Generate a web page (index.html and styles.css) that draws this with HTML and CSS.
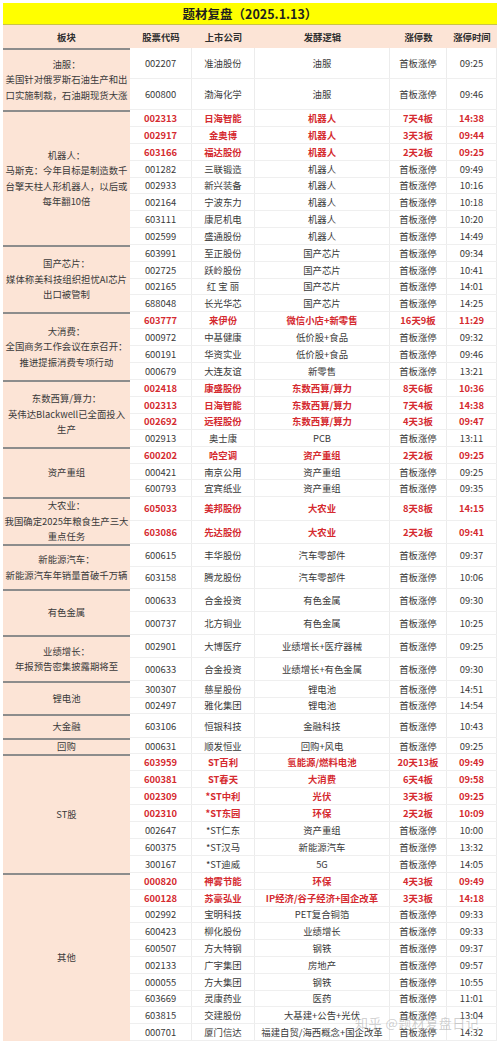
FILE: index.html
```html
<!DOCTYPE html>
<html lang="zh-CN">
<head>
<meta charset="utf-8">
<title>题材复盘（2025.1.13）</title>
<link rel="stylesheet" href="styles.css">
</head>
<body>
<div class="sheet">
  <div class="title">题材复盘（2025.1.13）</div>
  <div class="head">
    <div class="c-block">板块</div>
    <div class="c-code">股票代码</div>
    <div class="c-name">上市公司</div>
    <div class="c-logic">发酵逻辑</div>
    <div class="c-count">涨停数</div>
    <div class="c-time">涨停时间</div>
  </div>

  <div class="group h62">
    <div class="block">油服：<br>美国针对俄罗斯石油生产和出<br>口实施制裁，石油期现货大涨</div>
    <div class="rows">
      <div class="row"><div class="c-code">002207</div><div class="c-name">准油股份</div><div class="c-logic">油服</div><div class="c-count">首板涨停</div><div class="c-time">09:25</div></div>
      <div class="row"><div class="c-code">600800</div><div class="c-name">渤海化学</div><div class="c-logic">油服</div><div class="c-count">首板涨停</div><div class="c-time">09:46</div></div>
    </div>
  </div>

  <div class="group h135">
    <div class="block">机器人：<br>马斯克：今年目标是制造数千<br>台擎天柱人形机器人，以后或<br>每年翻10倍</div>
    <div class="rows">
      <div class="row hot"><div class="c-code">002313</div><div class="c-name">日海智能</div><div class="c-logic">机器人</div><div class="c-count">7天4板</div><div class="c-time">14:38</div></div>
      <div class="row hot"><div class="c-code">002917</div><div class="c-name">金奥博</div><div class="c-logic">机器人</div><div class="c-count">3天3板</div><div class="c-time">09:44</div></div>
      <div class="row hot"><div class="c-code">603166</div><div class="c-name">福达股份</div><div class="c-logic">机器人</div><div class="c-count">2天2板</div><div class="c-time">09:25</div></div>
      <div class="row"><div class="c-code">001282</div><div class="c-name">三联锻造</div><div class="c-logic">机器人</div><div class="c-count">首板涨停</div><div class="c-time">09:49</div></div>
      <div class="row"><div class="c-code">002933</div><div class="c-name">新兴装备</div><div class="c-logic">机器人</div><div class="c-count">首板涨停</div><div class="c-time">10:16</div></div>
      <div class="row"><div class="c-code">002164</div><div class="c-name">宁波东力</div><div class="c-logic">机器人</div><div class="c-count">首板涨停</div><div class="c-time">10:18</div></div>
      <div class="row"><div class="c-code">603111</div><div class="c-name">康尼机电</div><div class="c-logic">机器人</div><div class="c-count">首板涨停</div><div class="c-time">10:20</div></div>
      <div class="row"><div class="c-code">002599</div><div class="c-name">盛通股份</div><div class="c-logic">机器人</div><div class="c-count">首板涨停</div><div class="c-time">14:49</div></div>
    </div>
  </div>

  <div class="group h67">
    <div class="block">国产芯片：<br>媒体称美科技组织担忧AI芯片<br>出口被管制</div>
    <div class="rows">
      <div class="row"><div class="c-code">603991</div><div class="c-name">至正股份</div><div class="c-logic">国产芯片</div><div class="c-count">首板涨停</div><div class="c-time">09:34</div></div>
      <div class="row"><div class="c-code">002725</div><div class="c-name">跃岭股份</div><div class="c-logic">国产芯片</div><div class="c-count">首板涨停</div><div class="c-time">10:41</div></div>
      <div class="row"><div class="c-code">002165</div><div class="c-name">红 宝 丽</div><div class="c-logic">国产芯片</div><div class="c-count">首板涨停</div><div class="c-time">14:01</div></div>
      <div class="row"><div class="c-code">688048</div><div class="c-name">长光华芯</div><div class="c-logic">国产芯片</div><div class="c-count">首板涨停</div><div class="c-time">14:25</div></div>
    </div>
  </div>

  <div class="group h68">
    <div class="block">大消费：<br>全国商务工作会议在京召开：<br>推进提振消费专项行动</div>
    <div class="rows">
      <div class="row hot"><div class="c-code">603777</div><div class="c-name">来伊份</div><div class="c-logic">微信小店+新零售</div><div class="c-count">16天9板</div><div class="c-time">11:29</div></div>
      <div class="row"><div class="c-code">000972</div><div class="c-name">中基健康</div><div class="c-logic">低价股+食品</div><div class="c-count">首板涨停</div><div class="c-time">09:32</div></div>
      <div class="row"><div class="c-code">600191</div><div class="c-name">华资实业</div><div class="c-logic">低价股+食品</div><div class="c-count">首板涨停</div><div class="c-time">09:46</div></div>
      <div class="row"><div class="c-code">000679</div><div class="c-name">大连友谊</div><div class="c-logic">新零售</div><div class="c-count">首板涨停</div><div class="c-time">13:21</div></div>
    </div>
  </div>

  <div class="group h67">
    <div class="block">东数西算/算力：<br>英伟达Blackwell已全面投入<br>生产</div>
    <div class="rows">
      <div class="row hot"><div class="c-code">002418</div><div class="c-name">康盛股份</div><div class="c-logic">东数西算/算力</div><div class="c-count">8天6板</div><div class="c-time">10:36</div></div>
      <div class="row hot"><div class="c-code">002313</div><div class="c-name">日海智能</div><div class="c-logic">东数西算/算力</div><div class="c-count">7天4板</div><div class="c-time">14:38</div></div>
      <div class="row hot"><div class="c-code">002692</div><div class="c-name">远程股份</div><div class="c-logic">东数西算/算力</div><div class="c-count">4天3板</div><div class="c-time">09:47</div></div>
      <div class="row"><div class="c-code">002913</div><div class="c-name">奥士康</div><div class="c-logic">PCB</div><div class="c-count">首板涨停</div><div class="c-time">13:11</div></div>
    </div>
  </div>

  <div class="group h50">
    <div class="block">资产重组</div>
    <div class="rows">
      <div class="row hot"><div class="c-code">600202</div><div class="c-name">哈空调</div><div class="c-logic">资产重组</div><div class="c-count">2天2板</div><div class="c-time">09:25</div></div>
      <div class="row"><div class="c-code">000421</div><div class="c-name">南京公用</div><div class="c-logic">资产重组</div><div class="c-count">首板涨停</div><div class="c-time">09:25</div></div>
      <div class="row"><div class="c-code">600793</div><div class="c-name">宜宾纸业</div><div class="c-logic">资产重组</div><div class="c-count">首板涨停</div><div class="c-time">09:35</div></div>
    </div>
  </div>

  <div class="group h47">
    <div class="block">大农业：<br>我国确定2025年粮食生产三大<br>重点任务</div>
    <div class="rows">
      <div class="row hot"><div class="c-code">605033</div><div class="c-name">美邦股份</div><div class="c-logic">大农业</div><div class="c-count">8天8板</div><div class="c-time">14:15</div></div>
      <div class="row hot"><div class="c-code">603086</div><div class="c-name">先达股份</div><div class="c-logic">大农业</div><div class="c-count">2天2板</div><div class="c-time">09:41</div></div>
    </div>
  </div>

  <div class="group h45">
    <div class="block">新能源汽车：<br>新能源汽车年销量首破千万辆</div>
    <div class="rows">
      <div class="row"><div class="c-code">600615</div><div class="c-name">丰华股份</div><div class="c-logic">汽车零部件</div><div class="c-count">首板涨停</div><div class="c-time">09:37</div></div>
      <div class="row"><div class="c-code">603158</div><div class="c-name">腾龙股份</div><div class="c-logic">汽车零部件</div><div class="c-count">首板涨停</div><div class="c-time">10:06</div></div>
    </div>
  </div>

  <div class="group h46">
    <div class="block">有色金属</div>
    <div class="rows">
      <div class="row"><div class="c-code">000633</div><div class="c-name">合金投资</div><div class="c-logic">有色金属</div><div class="c-count">首板涨停</div><div class="c-time">09:30</div></div>
      <div class="row"><div class="c-code">000737</div><div class="c-name">北方铜业</div><div class="c-logic">有色金属</div><div class="c-count">首板涨停</div><div class="c-time">10:25</div></div>
    </div>
  </div>

  <div class="group h46">
    <div class="block">业绩增长：<br>年报预告密集披露期将至</div>
    <div class="rows">
      <div class="row"><div class="c-code">002901</div><div class="c-name">大博医疗</div><div class="c-logic">业绩增长+医疗器械</div><div class="c-count">首板涨停</div><div class="c-time">09:25</div></div>
      <div class="row"><div class="c-code">000633</div><div class="c-name">合金投资</div><div class="c-logic">业绩增长+有色金属</div><div class="c-count">首板涨停</div><div class="c-time">09:30</div></div>
    </div>
  </div>

  <div class="group h33">
    <div class="block">锂电池</div>
    <div class="rows">
      <div class="row"><div class="c-code">300307</div><div class="c-name">慈星股份</div><div class="c-logic">锂电池</div><div class="c-count">首板涨停</div><div class="c-time">14:51</div></div>
      <div class="row"><div class="c-code">002497</div><div class="c-name">雅化集团</div><div class="c-logic">锂电池</div><div class="c-count">首板涨停</div><div class="c-time">14:54</div></div>
    </div>
  </div>

  <div class="group h24">
    <div class="block">大金融</div>
    <div class="rows">
      <div class="row"><div class="c-code">603106</div><div class="c-name">恒银科技</div><div class="c-logic">金融科技</div><div class="c-count">首板涨停</div><div class="c-time">10:43</div></div>
    </div>
  </div>

  <div class="group h16">
    <div class="block">回购</div>
    <div class="rows">
      <div class="row"><div class="c-code">000631</div><div class="c-name">顺发恒业</div><div class="c-logic">回购+风电</div><div class="c-count">首板涨停</div><div class="c-time">09:25</div></div>
    </div>
  </div>

  <div class="group h119">
    <div class="block">ST股</div>
    <div class="rows">
      <div class="row hot"><div class="c-code">603959</div><div class="c-name">ST百利</div><div class="c-logic">氢能源/燃料电池</div><div class="c-count">20天13板</div><div class="c-time">09:49</div></div>
      <div class="row hot"><div class="c-code">600381</div><div class="c-name">ST春天</div><div class="c-logic">大消费</div><div class="c-count">6天4板</div><div class="c-time">09:58</div></div>
      <div class="row hot"><div class="c-code">002309</div><div class="c-name">*ST中利</div><div class="c-logic">光伏</div><div class="c-count">3天3板</div><div class="c-time">09:25</div></div>
      <div class="row hot"><div class="c-code">002310</div><div class="c-name">*ST东园</div><div class="c-logic">环保</div><div class="c-count">2天2板</div><div class="c-time">10:09</div></div>
      <div class="row"><div class="c-code">002647</div><div class="c-name">*ST仁东</div><div class="c-logic">资产重组</div><div class="c-count">首板涨停</div><div class="c-time">10:00</div></div>
      <div class="row"><div class="c-code">600375</div><div class="c-name">*ST汉马</div><div class="c-logic">新能源汽车</div><div class="c-count">首板涨停</div><div class="c-time">13:32</div></div>
      <div class="row"><div class="c-code">300167</div><div class="c-name">*ST迪威</div><div class="c-logic">5G</div><div class="c-count">首板涨停</div><div class="c-time">14:05</div></div>
    </div>
  </div>

  <div class="group h168 last">
    <div class="block">其他</div>
    <div class="rows">
      <div class="row hot"><div class="c-code">000820</div><div class="c-name">神雾节能</div><div class="c-logic">环保</div><div class="c-count">4天3板</div><div class="c-time">09:49</div></div>
      <div class="row hot"><div class="c-code">600128</div><div class="c-name">苏豪弘业</div><div class="c-logic">IP经济/谷子经济+国企改革</div><div class="c-count">3天3板</div><div class="c-time">14:18</div></div>
      <div class="row"><div class="c-code">002992</div><div class="c-name">宝明科技</div><div class="c-logic">PET复合铜箔</div><div class="c-count">首板涨停</div><div class="c-time">09:33</div></div>
      <div class="row"><div class="c-code">600423</div><div class="c-name">柳化股份</div><div class="c-logic">业绩增长</div><div class="c-count">首板涨停</div><div class="c-time">09:33</div></div>
      <div class="row"><div class="c-code">600507</div><div class="c-name">方大特钢</div><div class="c-logic">钢铁</div><div class="c-count">首板涨停</div><div class="c-time">09:37</div></div>
      <div class="row"><div class="c-code">002133</div><div class="c-name">广宇集团</div><div class="c-logic">房地产</div><div class="c-count">首板涨停</div><div class="c-time">09:57</div></div>
      <div class="row"><div class="c-code">000055</div><div class="c-name">方大集团</div><div class="c-logic">钢铁</div><div class="c-count">首板涨停</div><div class="c-time">10:55</div></div>
      <div class="row"><div class="c-code">603669</div><div class="c-name">灵康药业</div><div class="c-logic">医药</div><div class="c-count">首板涨停</div><div class="c-time">11:01</div></div>
      <div class="row"><div class="c-code">603815</div><div class="c-name">交建股份</div><div class="c-logic">大基建+公告+光伏</div><div class="c-count">首板涨停</div><div class="c-time">13:04</div></div>
      <div class="row"><div class="c-code">000701</div><div class="c-name">厦门信达</div><div class="c-logic">福建自贸/海西概念+国企改革</div><div class="c-count">首板涨停</div><div class="c-time">14:32</div></div>
    </div>
  </div>

  <div class="watermark">知乎 @题材复盘日记</div>
</div>
</body>
</html>
```

FILE: styles.css
```css
* {
  box-sizing: border-box;
}

body {
  margin: 0;
  background: #ffffff;
  font-family: "Noto Sans CJK SC", "Noto Sans", sans-serif;
  font-size: 9.4px;
  color: #3a3a3a;
}

.sheet {
  position: relative;
  width: 494px;
  margin: 3px 3px 0;
}

.title {
  height: 22px;
  background: #ffff00;
  border-bottom: 1px solid #c9c34a;
  display: flex;
  align-items: center;
  justify-content: center;
  font-size: 12.5px;
  font-weight: 700;
  color: #1f1f1f;
}

.head {
  display: flex;
  height: 23px;
  background: #fce4d6;
  font-weight: 700;
  color: #2e2e2e;
}

.head > div,
.row > div {
  display: flex;
  align-items: center;
  justify-content: center;
  white-space: nowrap;
}

.c-block { width: 127px; }
.c-code  { width: 62px; }
.c-name  { width: 63px; }
.c-logic { width: 135px; }
.c-count { width: 57px; }
.c-time  { width: 50px; }

.group {
  display: flex;
}

.block {
  width: 127px;
  flex: none;
  background: #fce4d6;
  border-top: 2px solid #8c8c8c;
  display: flex;
  align-items: center;
  justify-content: center;
  text-align: center;
  line-height: 15.5px;
  white-space: nowrap;
  color: #3a3a3a;
}

.rows {
  flex: 1;
  display: flex;
  flex-direction: column;
}

.row {
  flex: 1 1 0;
  min-height: 0;
  display: flex;
  border-bottom: 1px solid #efefef;
}

.row > div {
  border-right: 1px solid #ececec;
}

.row.hot {
  color: #d52a2f;
  font-weight: 700;
}

.h16  { height: 16px; }
.h24  { height: 24px; }
.h33  { height: 33px; }
.h45  { height: 45px; }
.h46  { height: 46px; }
.h47  { height: 47px; }
.h50  { height: 50px; }
.h62  { height: 62px; }
.h67  { height: 67px; }
.h68  { height: 68px; }
.h119 { height: 119px; }
.h135 { height: 135px; }
.h168 { height: 168px; }

.watermark {
  position: absolute;
  left: 352px;
  top: 1010px;
  font-size: 13px;
  color: rgba(150, 150, 150, 0.45);
  white-space: nowrap;
  letter-spacing: 0.5px;
}
```
